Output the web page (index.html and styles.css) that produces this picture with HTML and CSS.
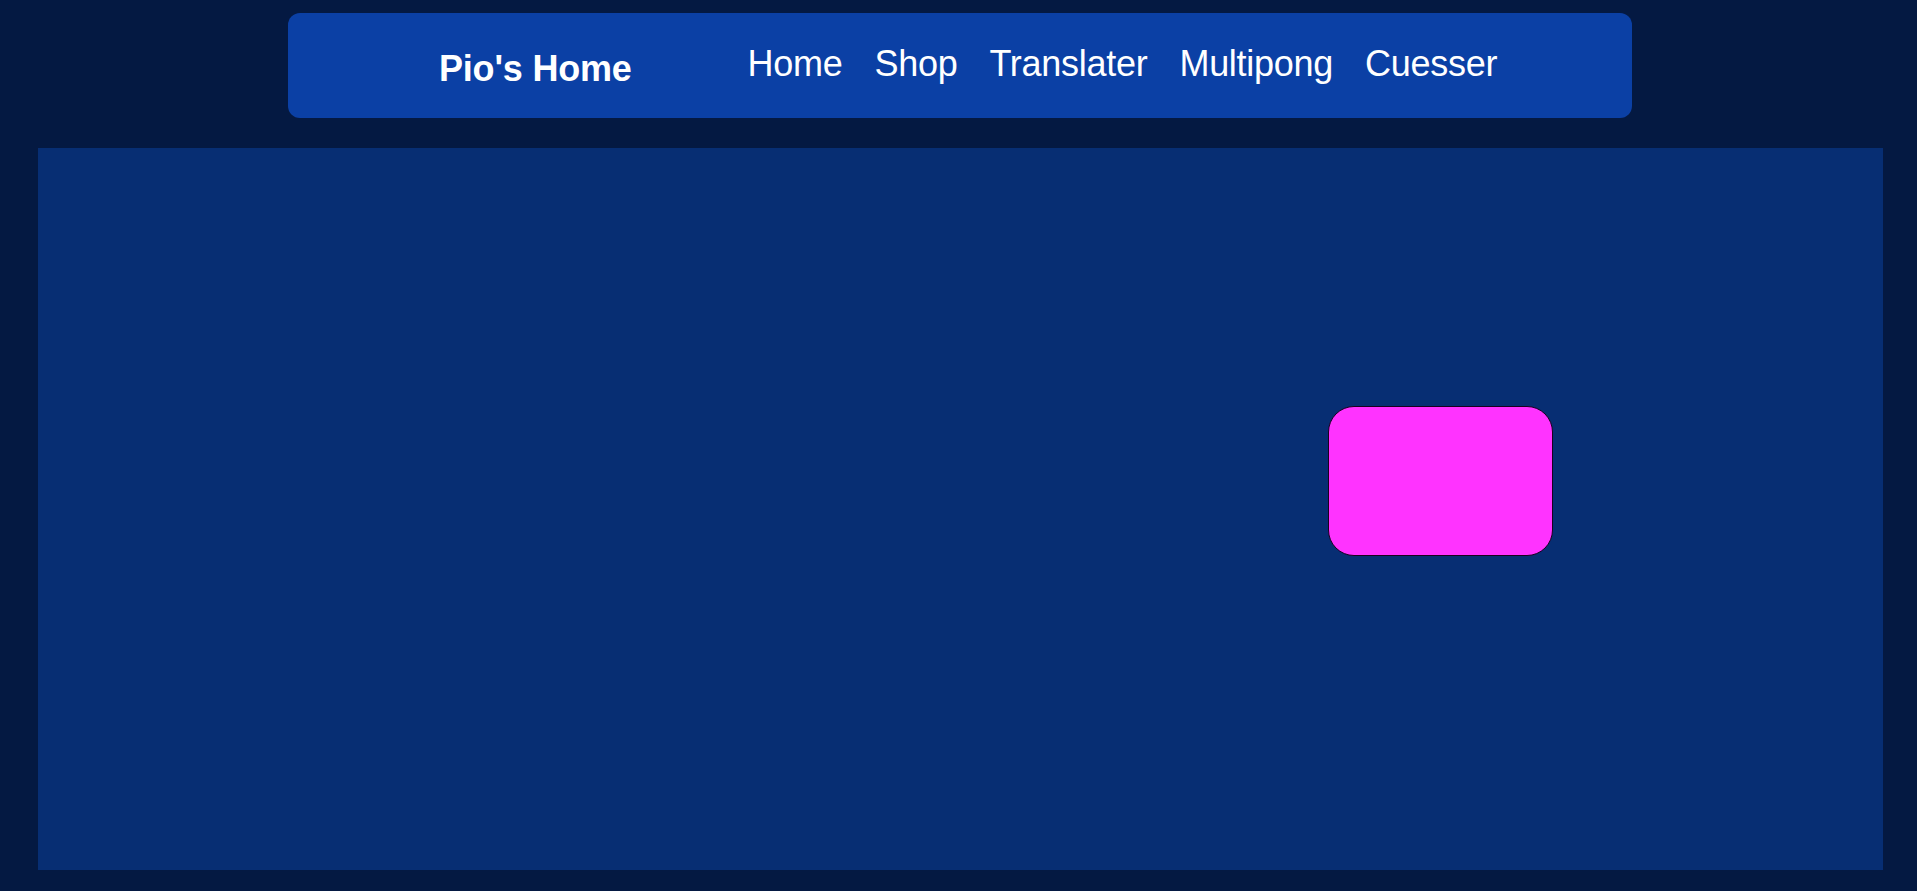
FILE: index.html
```html
<!DOCTYPE html>
<html>
<head>
<meta charset="utf-8">
<title>Pio's Home</title>
<link rel="stylesheet" href="styles.css">
</head>
<body>
  <nav class="navbar">
    <div class="brand">Pio's Home</div>
    <ul class="links">
      <li><a href="#">Home</a></li>
      <li><a href="#">Shop</a></li>
      <li><a href="#">Translater</a></li>
      <li><a href="#">Multipong</a></li>
      <li><a href="#">Cuesser</a></li>
    </ul>
  </nav>
  <main class="board">
    <div class="paddle"></div>
  </main>
</body>
</html>
```
FILE: styles.css
```css
html, body {
  margin: 0;
  padding: 0;
}
body {
  background: #041942;
  font-family: "Liberation Sans", Arial, sans-serif;
  color: #ffffff;
  height: 891px;
  overflow: hidden;
}
.navbar {
  box-sizing: border-box;
  width: 1344px;
  height: 105px;
  margin: 13px 0 0 288px;
  background: #0b40a5;
  border-radius: 12px;
  display: flex;
  align-items: flex-start;
  padding-left: 151px;
}
.brand {
  font-size: 36px;
  line-height: 41px;
  font-weight: bold;
  margin-top: 35px;
  letter-spacing: -0.2px;
}
.links {
  list-style: none;
  margin: 30px 0 0 116px;
  padding: 0;
  display: flex;
  gap: 32px;
}
.links a {
  color: #ffffff;
  text-decoration: none;
  font-size: 36px;
  line-height: 41px;
  letter-spacing: -0.28px;
}
.board {
  position: relative;
  width: 1845px;
  height: 722px;
  margin: 30px 0 0 38px;
  background: #072e73;
}
.paddle {
  position: absolute;
  left: 1290px;
  top: 258px;
  width: 225px;
  height: 150px;
  box-sizing: border-box;
  background: #ff33ff;
  border: 1.5px solid #1a0020;
  border-radius: 26px;
}
```
